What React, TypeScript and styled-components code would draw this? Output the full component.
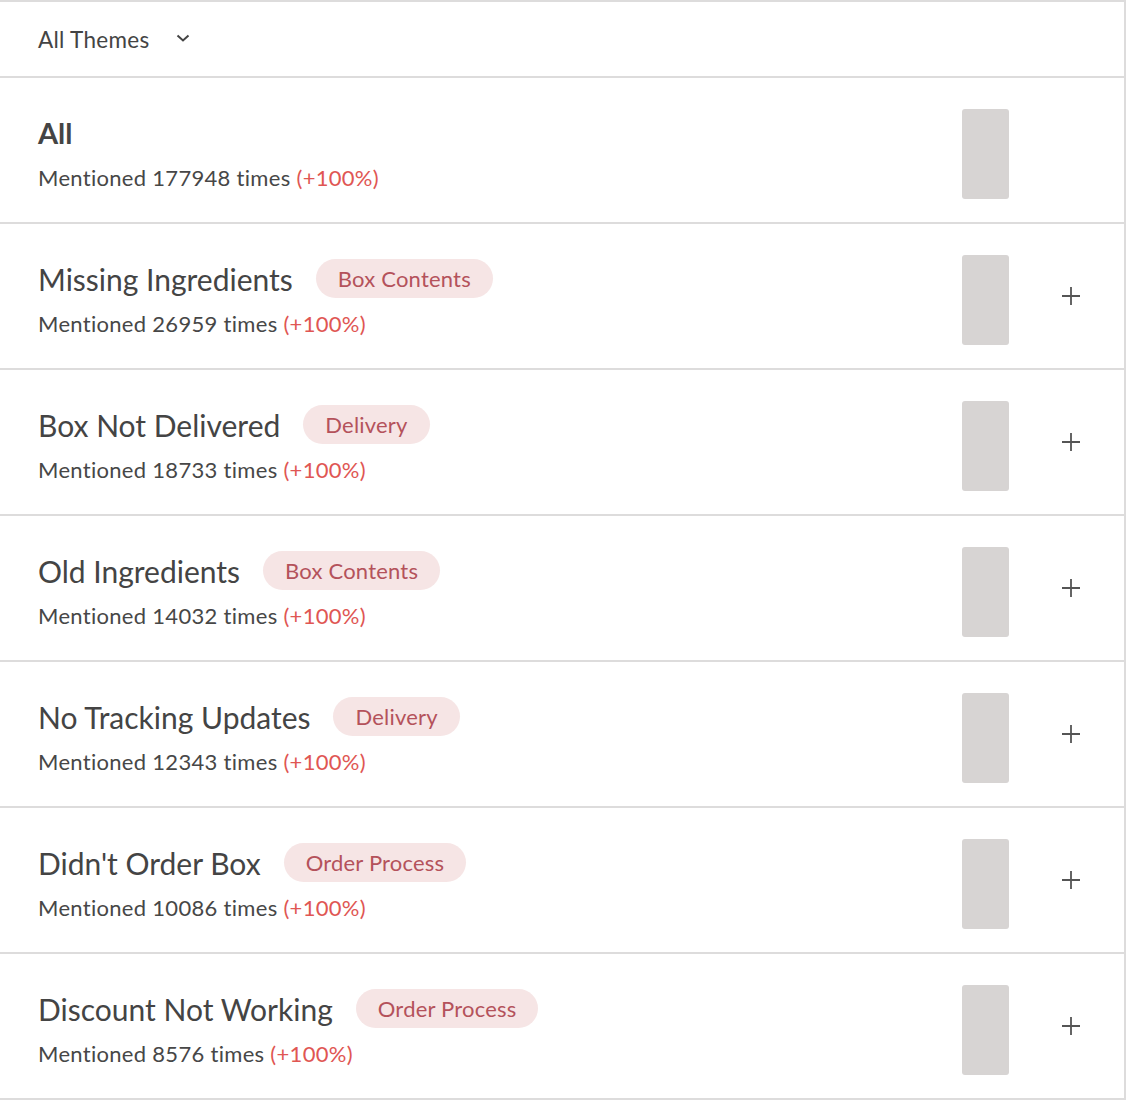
import React from "react";
import styled, { createGlobalStyle } from "styled-components";

interface Theme {
  name: string;
  mentions: number;
  category?: string;
}

const themes: Theme[] = [
  { name: "Missing Ingredients", mentions: 26959, category: "Box Contents" },
  { name: "Box Not Delivered", mentions: 18733, category: "Delivery" },
  { name: "Old Ingredients", mentions: 14032, category: "Box Contents" },
  { name: "No Tracking Updates", mentions: 12343, category: "Delivery" },
  { name: "Didn't Order Box", mentions: 10086, category: "Order Process" },
  { name: "Discount Not Working", mentions: 8576, category: "Order Process" },
];

const GlobalStyle = createGlobalStyle`
  body {
    margin: 0;
    background: #fff;
    font-family: Lato, "Open Sans", sans-serif;
    color: #444;
  }
`;

const Panel = styled.div`
  width: 1124px;
  border-top: 2px solid #dddcdc;
  border-right: 2px solid #dddcdc;
`;

const Header = styled.div`
  height: 74px;
  display: flex;
  align-items: center;
  gap: 26px;
  padding-left: 38px;
  border-bottom: 2px solid #dddcdc;
  font-size: 22.5px;
  letter-spacing: 0.3px;
  color: #444;
`;

const Chevron = styled.svg`
  width: 14px;
  height: 8px;
  margin-top: -2px;
`;

const Row = styled.div`
  height: 144px;
  display: flex;
  align-items: flex-start;
  padding: 0 44px 0 38px;
  border-bottom: 2px solid #dddcdc;
`;

const Info = styled.div`
  flex: 1;
  padding-top: 35px;
`;

const TitleLine = styled.div`
  height: 39px;
  display: flex;
  align-items: center;
  gap: 23px;
`;

const Title = styled.div<{ $bold?: boolean }>`
  font-size: ${(p) => (p.$bold ? "29px" : "30px")};
  font-weight: ${(p) => (p.$bold ? 700 : 400)};
  color: #444;
`;

const Pill = styled.span`
  height: 39px;
  display: inline-flex;
  align-items: center;
  padding: 0 22px;
  border-radius: 20px;
  background: #f6e5e5;
  color: #b4525b;
  font-size: 22px;
  letter-spacing: 0.2px;
`;

const Mentions = styled.div`
  margin-top: 12px;
  font-size: 22px;
  letter-spacing: 0.3px;
  line-height: 28px;
  color: #474747;
`;

const Change = styled.span`
  color: #e05653;
`;

const Bar = styled.div`
  width: 47px;
  height: 90px;
  margin-top: 31px;
  border-radius: 3px;
  background: #d7d4d3;
`;

const Action = styled.div<{ $hidden?: boolean }>`
  width: 18px;
  height: 18px;
  margin: 63px 0 0 53px;
  visibility: ${(p) => (p.$hidden ? "hidden" : "visible")};
  cursor: pointer;
`;

const PlusIcon = () => (
  <svg width="18" height="18" viewBox="0 0 18 18">
    <path d="M9 0v18M0 9h18" stroke="#555" strokeWidth="1.8" fill="none" />
  </svg>
);

const ThemeRow = ({ theme, total }: { theme: Theme; total?: boolean }) => (
  <Row>
    <Info>
      <TitleLine>
        <Title $bold={total}>{theme.name}</Title>
        {theme.category && <Pill>{theme.category}</Pill>}
      </TitleLine>
      <Mentions>
        Mentioned {theme.mentions} times <Change>(+100%)</Change>
      </Mentions>
    </Info>
    <Bar />
    <Action $hidden={total}>
      <PlusIcon />
    </Action>
  </Row>
);

export default function App() {
  return (
    <>
      <GlobalStyle />
      <Panel>
        <Header>
          All Themes
          <Chevron viewBox="0 0 14 8">
            <path
              d="M1.5 1.5l5.5 5 5.5-5"
              stroke="#444"
              strokeWidth="2"
              fill="none"
            />
          </Chevron>
        </Header>
        <ThemeRow theme={{ name: "All", mentions: 177948 }} total />
        {themes.map((t) => (
          <ThemeRow key={t.name} theme={t} />
        ))}
      </Panel>
    </>
  );
}
